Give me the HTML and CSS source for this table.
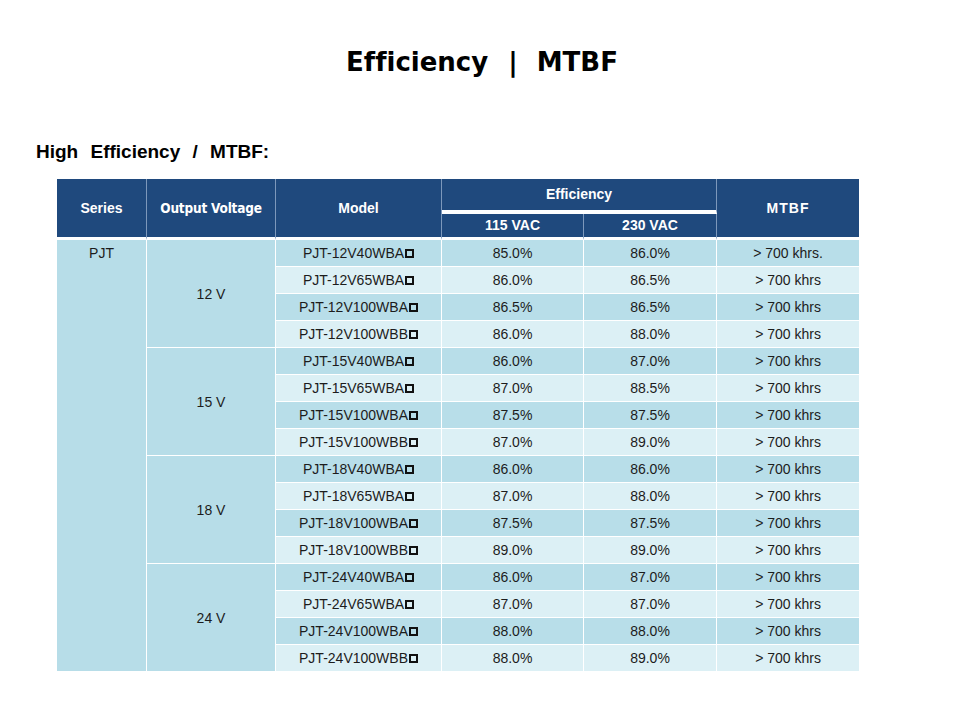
FILE: index.html
```html
<!DOCTYPE html>
<html>
<head>
<meta charset="utf-8">
<title>Efficiency | MTBF</title>
<link rel="stylesheet" href="styles.css">
</head>
<body>
<h1 class="title"><span>Efficiency</span><span class="sep">|</span><span>MTBF</span></h1>
<h2 class="subtitle">High Efficiency / MTBF:</h2>
<table class="spec">
  <colgroup>
    <col class="c1"><col class="c2"><col class="c3"><col class="c4"><col class="c5"><col class="c6">
  </colgroup>
  <thead>
    <tr>
      <th rowspan="2">Series</th>
      <th rowspan="2" class="ov">Output Voltage</th>
      <th rowspan="2">Model</th>
      <th colspan="2" class="eff">Efficiency</th>
      <th rowspan="2" class="last mtbf">MTBF</th>
    </tr>
    <tr class="sub">
      <th>115 VAC</th>
      <th>230 VAC</th>
    </tr>
  </thead>
  <tbody>
    <tr class="a"><td rowspan="16" class="merge series">PJT</td><td rowspan="4" class="merge">12 V</td><td>PJT-12V40WBA<span class="bx"></span></td><td>85.0%</td><td>86.0%</td><td class="last">&gt; 700 khrs.</td></tr>
    <tr class="b"><td>PJT-12V65WBA<span class="bx"></span></td><td>86.0%</td><td>86.5%</td><td class="last">&gt; 700 khrs</td></tr>
    <tr class="a"><td>PJT-12V100WBA<span class="bx"></span></td><td>86.5%</td><td>86.5%</td><td class="last">&gt; 700 khrs</td></tr>
    <tr class="b"><td>PJT-12V100WBB<span class="bx"></span></td><td>86.0%</td><td>88.0%</td><td class="last">&gt; 700 khrs</td></tr>
    <tr class="a"><td rowspan="4" class="merge">15 V</td><td>PJT-15V40WBA<span class="bx"></span></td><td>86.0%</td><td>87.0%</td><td class="last">&gt; 700 khrs</td></tr>
    <tr class="b"><td>PJT-15V65WBA<span class="bx"></span></td><td>87.0%</td><td>88.5%</td><td class="last">&gt; 700 khrs</td></tr>
    <tr class="a"><td>PJT-15V100WBA<span class="bx"></span></td><td>87.5%</td><td>87.5%</td><td class="last">&gt; 700 khrs</td></tr>
    <tr class="b"><td>PJT-15V100WBB<span class="bx"></span></td><td>87.0%</td><td>89.0%</td><td class="last">&gt; 700 khrs</td></tr>
    <tr class="a"><td rowspan="4" class="merge">18 V</td><td>PJT-18V40WBA<span class="bx"></span></td><td>86.0%</td><td>86.0%</td><td class="last">&gt; 700 khrs</td></tr>
    <tr class="b"><td>PJT-18V65WBA<span class="bx"></span></td><td>87.0%</td><td>88.0%</td><td class="last">&gt; 700 khrs</td></tr>
    <tr class="a"><td>PJT-18V100WBA<span class="bx"></span></td><td>87.5%</td><td>87.5%</td><td class="last">&gt; 700 khrs</td></tr>
    <tr class="b"><td>PJT-18V100WBB<span class="bx"></span></td><td>89.0%</td><td>89.0%</td><td class="last">&gt; 700 khrs</td></tr>
    <tr class="a"><td rowspan="4" class="merge">24 V</td><td>PJT-24V40WBA<span class="bx"></span></td><td>86.0%</td><td>87.0%</td><td class="last">&gt; 700 khrs</td></tr>
    <tr class="b"><td>PJT-24V65WBA<span class="bx"></span></td><td>87.0%</td><td>87.0%</td><td class="last">&gt; 700 khrs</td></tr>
    <tr class="a"><td>PJT-24V100WBA<span class="bx"></span></td><td>88.0%</td><td>88.0%</td><td class="last">&gt; 700 khrs</td></tr>
    <tr class="b"><td>PJT-24V100WBB<span class="bx"></span></td><td>88.0%</td><td>89.0%</td><td class="last">&gt; 700 khrs</td></tr>
  </tbody>
</table>
</body>
</html>
```
FILE: styles.css
```css
html, body {
  margin: 0;
  padding: 0;
  background: #ffffff;
}
body {
  width: 960px;
  height: 720px;
  overflow: hidden;
}
.title {
  margin: 0;
  padding-top: 46px;
  height: 32px;
  line-height: 32px;
  text-align: center;
  font-family: "DejaVu Sans", "Liberation Sans", sans-serif;
  font-weight: bold;
  font-size: 26px;
  font-variant-ligatures: none;
  color: #000;
  padding-left: 4px;
}
.title .sep {
  margin: 0 19px 0 20px;
}
.subtitle {
  margin: 63px 0 0 36px;
  height: 22px;
  line-height: 22px;
  font-family: "Liberation Sans", Arial, sans-serif;
  font-weight: bold;
  font-size: 19px;
  word-spacing: 7px;
  color: #000;
}
.spec {
  margin: 16px 0 0 57px;
  width: 802px;
  table-layout: fixed;
  border-collapse: separate;
  border-spacing: 0;
  font-family: "Liberation Sans", Arial, sans-serif;
}
.c1 { width: 90px; }
.c2 { width: 129px; }
.c3 { width: 166px; }
.c4 { width: 142px; }
.c5 { width: 133px; }
.c6 { width: 142px; }
.spec th {
  box-sizing: border-box;
  padding: 0;
  background: #1f497d;
  color: #ffffff;
  font-weight: bold;
  font-size: 14px;
  text-align: center;
  vertical-align: middle;
  border-right: 1px solid #7d98bb;
  border-bottom: 3px solid #ffffff;
}
.spec th.eff {
  height: 35px;
  border-bottom: 4px solid #ffffff;
  padding-bottom: 2px;
}
.spec tr.sub th {
  height: 26px;
  padding-bottom: 1px;
}
.spec th.ov {
  font-family: "DejaVu Sans Condensed", "DejaVu Sans", sans-serif;
  font-stretch: condensed;
  font-size: 13.5px;
  letter-spacing: -0.2px;
}
.spec th.mtbf {
  letter-spacing: 1px;
}
.spec .last {
  border-right: none;
}
.spec td {
  box-sizing: border-box;
  height: 27px;
  padding: 0;
  text-align: center;
  vertical-align: middle;
  font-size: 14px;
  color: #1c1c1c;
  border-right: 1px solid #ffffff;
  border-bottom: 1px solid #ffffff;
}
.spec tr.a td {
  background: #b8dee9;
}
.spec tr.b td {
  background: #dcf0f5;
}
.spec tr td.merge {
  background: #b7dde8;
}
.spec td.series {
  vertical-align: top;
  line-height: 26px;
}
.bx {
  display: inline-block;
  box-sizing: border-box;
  width: 9px;
  height: 9px;
  border: 2px solid #111111;
  margin-left: 1px;
  vertical-align: 0;
}
```
